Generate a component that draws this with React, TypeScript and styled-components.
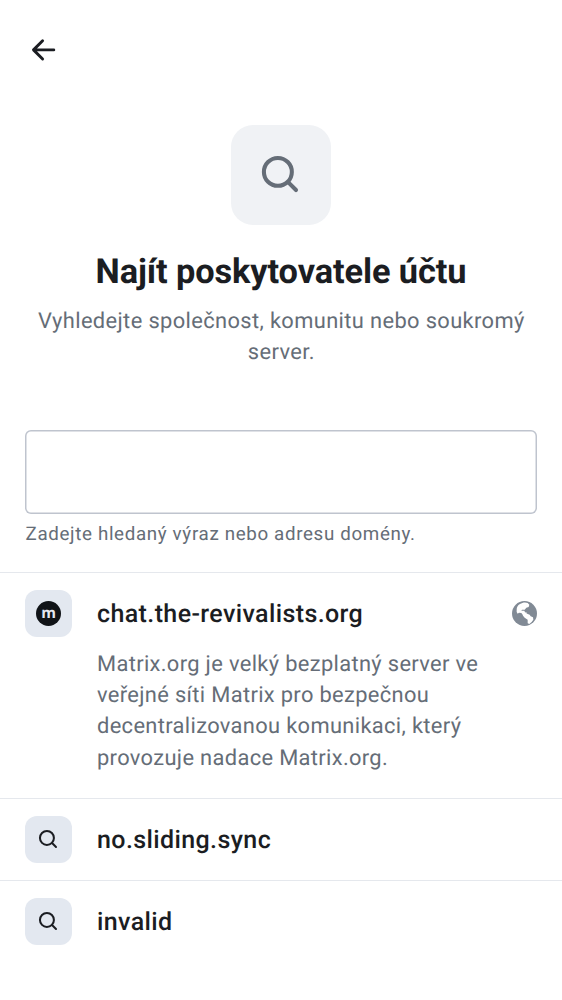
import React from "react";
import styled, { createGlobalStyle } from "styled-components";

const Global = createGlobalStyle`
  * { box-sizing: border-box; }
  body { margin: 0; background: #fff; font-family: Roboto, "Noto Sans", sans-serif; color: #1b1d22; text-rendering: geometricPrecision; }
`;
const Screen = styled.main`
  display: flex; flex-direction: column; width: 562px; height: 1000px; overflow: hidden;
`;
const TopBar = styled.header`
  height: 100px; padding: 31px 25px; display: flex;
`;
const BackButton = styled.button`
  border: 0; padding: 0; width: 38px; height: 38px; background: none; display: flex; align-items: center; justify-content: center;
`;
const Hero = styled.section`
  display: flex; flex-direction: column; align-items: center; padding: 25px 25px 0; height: 330px;
`;
const HeroIcon = styled.div`
  width: 100px; height: 100px; border-radius: 22px; background: #f0f2f5; display: flex; align-items: center; justify-content: center;
`;
const Title = styled.h1`
  margin: 26px 0 0; font-size: 34.375px; line-height: 43px; font-weight: 700; letter-spacing: -0.1px; white-space: nowrap;
`;
const Subtitle = styled.p`
  margin: 12px 0 0; padding-left: 0.6px; font-size: 21.875px; line-height: 31.25px; letter-spacing: 0.37px; color: #656d77; text-align: center;
`;
const Field = styled.label`
  display: flex; flex-direction: column; padding: 0 25px; height: 142px;
`;
const Input = styled.input`
  width: 100%; height: 84px; border: 0; box-shadow: inset 0 0 0 1.5px #bfc4ce; border-radius: 6px; background: #fff; outline: 0;
`;
const Hint = styled.span`
  margin-top: 7.5px; padding-left: 0.5px; font-size: 18.75px; line-height: 25px; letter-spacing: 0.655px; color: #656d77;
`;
const Provider = styled.article<{ $height: number }>`
  height: ${p => p.$height}px; border-top: 1px solid #e5e8ed; padding: 17px 25px 0;
`;
const ProviderHead = styled.div`
  display: flex; align-items: center; height: 47px;
`;
const Avatar = styled.div`
  width: 47px; height: 47px; border-radius: 12px; background: #e3e8f0; display: flex; align-items: center; justify-content: center; margin-right: 25px;
`;
const Name = styled.h2`
  margin: 0; padding-top: 2px; flex: 1; font-size: 25px; line-height: 37px; font-weight: 500; letter-spacing: 0.39px;
`;
const Description = styled.p`
  margin: 11.8px 0 0 72px; font-size: 21.875px; line-height: 31.25px; letter-spacing: 0.345px; color: #656d77;
`;
const Logo = styled.span`
  width: 25px; height: 25px; border-radius: 50%; background: #101317; color: #e4e8f0; display: flex; align-items: center; justify-content: center;
  font: 700 15px/20px "Open Sans", sans-serif; padding-bottom: 2px;
`;

const SearchIcon = ({ size, color }: { size: number; color: string }) => (
  <svg width={size} height={size} viewBox="0 0 24 24" fill="none" stroke={color} strokeWidth="1.95" strokeLinecap="round">
    <circle cx="10.5" cy="10.5" r="6.7" /><path d="m15.4 15.4 3.8 3.8" />
  </svg>
);
const Globe = () => (
  <svg width="25" height="25" viewBox="0 0 75 75">
    <circle cx="37.5" cy="37.5" r="37.5" fill="#818a95" />
    <g fill="#fff">
      <path d="M14 27C14 19 17 13 24 9c7-5 17-6 23-3l5 5-2 7-7 2-5 6-8 0-2 3 9 0 2 5 6 1-3 5-11 0-3-4-7-1-4 3-3-5z" />
      <path d="M31 38l11-1 11 4 3 5 7 3 1 7-5 7-7 6-5-2 0-11-9-6-5-6z" />
    </g>
  </svg>
);

export default function App() {
  return (
    <Screen>
      <Global />
      <TopBar>
        <BackButton aria-label="Zpět">
          <svg width="38" height="38" viewBox="0 0 38 38" fill="none" stroke="#1b1d22" strokeWidth="2.9" strokeLinecap="round" strokeLinejoin="round"><path d="M28.8 18.9H8.8M17.6 9.8l-9.1 9.1 9.1 9.1" /></svg>
        </BackButton>
      </TopBar>
      <Hero>
        <HeroIcon><SearchIcon size={50} color="#656d77" /></HeroIcon>
        <Title>Najít poskytovatele účtu</Title>
        <Subtitle>Vyhledejte společnost, komunitu nebo soukromý<br />server.</Subtitle>
      </Hero>
      <Field>
        <Input />
        <Hint>Zadejte hledaný výraz nebo adresu domény.</Hint>
      </Field>
      <Provider $height={226}>
        <ProviderHead><Avatar><Logo>m</Logo></Avatar><Name>chat.the-revivalists.org</Name><Globe /></ProviderHead>
        <Description>Matrix.org je velký bezplatný server ve<br />veřejné síti Matrix pro bezpečnou<br />decentralizovanou komunikaci, který<br />provozuje nadace Matrix.org.</Description>
      </Provider>
      <Provider $height={82}>
        <ProviderHead><Avatar><SearchIcon size={25} color="#1b1d22" /></Avatar><Name>no.sliding.sync</Name></ProviderHead>
      </Provider>
      <Provider $height={120}>
        <ProviderHead><Avatar><SearchIcon size={25} color="#1b1d22" /></Avatar><Name>invalid</Name></ProviderHead>
      </Provider>
    </Screen>
  );
}
